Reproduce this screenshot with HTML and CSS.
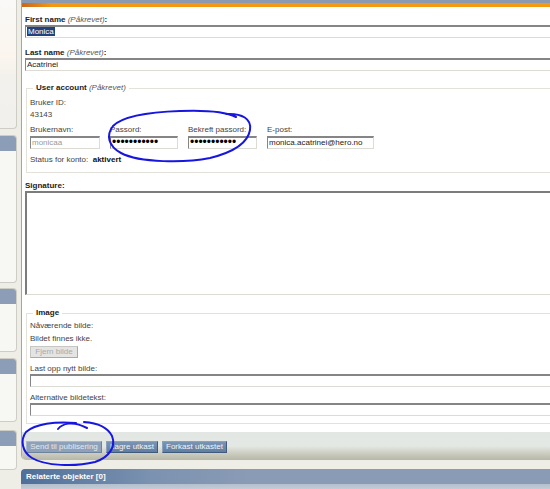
FILE: index.html
```html
<!DOCTYPE html>
<html lang="no">
<head>
<meta charset="utf-8">
<title>Bruker</title>
<link rel="stylesheet" href="styles.css">
</head>
<body>
<div class="page">
  <aside class="sidebar">
    <div class="sp p1"></div>
    <div class="sp p2"><div class="sp-h"></div></div>
    <div class="sp p3"><div class="sp-h"></div></div>
    <div class="sp p4"><div class="sp-h"></div></div>
    <div class="sp p5"><div class="sp-h"></div></div>
  </aside>
  <main class="main">
    <div class="inner">
      <div class="sheet">
        <div class="topbar"></div>
        <div class="form">
          <div class="lbl">First name <em>(Påkrevet)</em>:</div>
          <div class="field"><span class="sel">Monica</span></div>
          <div class="lbl mt10">Last name <em>(Påkrevet)</em>:</div>
          <div class="field">Acatrinei</div>

          <div class="group g-user">
            <div class="legend">User account <em>(Påkrevet)</em></div>
            <div class="line mt5">Bruker ID:</div>
            <div class="line mt2">43143</div>
            <div class="row">
              <div class="col w70"><span class="cap">Brukernavn:</span><div class="field dis">monicaa</div></div>
              <div class="col w68"><span class="cap">Passord:</span><div class="field pw">•••••••••••</div></div>
              <div class="col w69"><span class="cap">Bekreft passord:</span><div class="field pw">•••••••••••</div></div>
              <div class="col w107"><span class="cap">E-post:</span><div class="field">monica.acatrinei@hero.no</div></div>
            </div>
            <div class="line mt6">Status for konto: &nbsp;<strong>aktivert</strong></div>
          </div>

          <div class="lbl mt8">Signature:</div>
          <div class="area"></div>

          <div class="group g-image">
            <div class="legend">Image</div>
            <div class="line mt3">Nåværende bilde:</div>
            <div class="line mt3">Bildet finnes ikke.</div>
            <div class="btn-dis">Fjern bilde</div>
            <div class="line mt6">Last opp nytt bilde:</div>
            <div class="field"></div>
            <div class="line mt6">Alternative bildetekst:</div>
            <div class="field"></div>
          </div>
        </div>
        <div class="actions">
          <button class="btn light w76" type="button">Send til publisering</button>
          <button class="btn w52" type="button">Lagre utkast</button>
          <button class="btn w65" type="button">Forkast utkastet</button>
        </div>
      </div>
      <div class="related">
        <div class="rhead">Relaterte objekter [0]</div>
        <div class="rbody"></div>
      </div>
    </div>
  </main>
</div>
<svg class="marks" width="550" height="489" viewBox="0 0 550 489" aria-hidden="true">
  <path d="M 226 114 C 242 113, 252 119, 250 130 C 248 142, 234 152, 210 158 C 185 163, 140 163, 121 153 C 108 146, 106 135, 113 126 C 123 116, 150 112, 180 111 C 205 110, 224 111, 236 117" />
  <path d="M 58 429 C 62 424, 72 420, 87 428" />
  <path d="M 76 423 C 55 421, 35 424, 26 432 C 20 440, 22 452, 32 458 C 45 466, 75 467, 95 462 C 110 457, 116 446, 112 436 C 108 428, 98 423, 84 422" />
</svg>
</body>
</html>
```

FILE: styles.css
```css
html, body {
  margin: 0;
  padding: 0;
}

body {
  width: 550px;
  height: 489px;
  overflow: hidden;
  position: relative;
  background: #efeee6;
  font-family: "Liberation Sans", Arial, sans-serif;
  font-size: 8px;
  line-height: 10px;
  color: #333;
}

.page {
  display: flex;
  gap: 4px;
  width: 550px;
  height: 489px;
  overflow: hidden;
}

/* sidebar */
.sidebar {
  width: 17px;
  flex: none;
  display: flex;
  flex-direction: column;
}

.sp {
  box-sizing: border-box;
  background: #f7f7f4;
  border: 1px solid #cdcdc5;
  border-left: none;
  border-radius: 0 4px 4px 0;
  overflow: hidden;
}

.sp-h {
  height: 15px;
  background: #8c9db7;
}

.p1 {
  height: 129px;
  border-top: none;
  border-radius: 0 0 4px 0;
  background: linear-gradient(#f9f9f7 0, #fbf5ee 45%, #f3f1ec 60%, #f1f0ec 100%);
}

.p2 { height: 148px; margin-top: 6px; }
.p3 { height: 64px; margin-top: 5px; }
.p4 { height: 64px; margin-top: 6px; }
.p5 { height: 40px; margin-top: 8px; }

/* main */
.main {
  flex: 1;
  min-width: 0;
  overflow: hidden;
}

.inner {
  width: 640px;
}

.sheet {
  background: #fff;
  border-left: 1px solid #a6a69e;
  border-bottom-left-radius: 5px;
  overflow: hidden;
}

.topbar {
  height: 4px;
  border-top: 3px solid #8b9ab0;
  background: linear-gradient(90deg, #c9671c 0, #f39712 30px, #f49a10 100%);
}

.form {
  padding: 8px 0 8px 3px;
}

.lbl {
  height: 10px;
  font-weight: bold;
  color: #222;
}

em {
  font-weight: normal;
  font-style: italic;
  color: #555;
}

.line {
  height: 10px;
  color: #444;
}

.line strong {
  color: #111;
}

.mt2 { margin-top: 2px; }
.mt3 { margin-top: 3px; }
.mt5 { margin-top: 5px; }
.mt6 { margin-top: 6px; }
.mt8 { margin-top: 8px; }
.mt10 { margin-top: 10px; }

.field {
  box-sizing: border-box;
  height: 13px;
  border: 1px solid #dcdcd4;
  border-top: 2px solid #858585;
  border-left-color: #858585;
  background: #fff;
  padding-left: 1px;
  line-height: 10px;
  white-space: nowrap;
  overflow: hidden;
  color: #222;
}

.field.dis {
  color: #9a9a9a;
}

.field.pw {
  font-size: 12px;
  line-height: 9px;
  color: #000;
}

.sel {
  background: #22417f;
  color: #fff;
  padding: 0 1px;
}

.group {
  border: 1px solid #e2e2da;
  margin-left: 1px;
  padding: 0 0 7px 3px;
}

.g-user { margin-top: 17px; }
.g-image { margin-top: 18px; }

.legend {
  width: fit-content;
  height: 10px;
  margin: -6px 0 0 3px;
  padding: 0 3px;
  background: #fff;
  font-weight: bold;
  color: #222;
}

.row {
  display: flex;
  gap: 10px;
  margin-top: 5px;
}

.col {
  display: flex;
  flex-direction: column;
  gap: 1px;
}

.cap {
  height: 10px;
  color: #444;
  white-space: nowrap;
}

.w70 { width: 70px; }
.w68 { width: 68px; }
.w69 { width: 69px; }
.w107 { width: 107px; }

.area {
  box-sizing: border-box;
  height: 104px;
  border: 1px solid #dcdcd4;
  border-top: 2px solid #7c7c7c;
  border-left: 2px solid #7c7c7c;
  background: #fff;
}

.btn-dis {
  box-sizing: border-box;
  width: 48px;
  height: 12px;
  margin-top: 2px;
  border: 1px solid #c6c6c2;
  border-right-color: #a9a9a5;
  border-bottom-color: #a9a9a5;
  background: #e4e4e2;
  color: #aaa;
  text-align: center;
  line-height: 10px;
}

/* actions */
.actions {
  box-sizing: border-box;
  height: 28px;
  padding: 9px 0 0 4px;
  display: flex;
  align-items: flex-start;
  gap: 4px;
  background: linear-gradient(#e3e7e3 0, #e4e8e4 50%, #c9c9bc 80%, #b8b8a8 100%);
}

.btn {
  box-sizing: border-box;
  height: 12px;
  margin: 0;
  padding: 0;
  border: 1px solid #3f5a7b;
  border-top-color: #8aa0bb;
  border-left-color: #8aa0bb;
  background: linear-gradient(#7a94b3, #617ea1);
  color: #f1f4f8;
  font-family: inherit;
  font-size: 8px;
  line-height: 10px;
  text-align: center;
  white-space: nowrap;
}

.btn.light {
  background: #8ea1b9;
  border-color: #6d829d;
  border-top-color: #a9b8ca;
  border-left-color: #a9b8ca;
  color: #e2e8ef;
}

.w76 { width: 76px; }
.w52 { width: 52px; }
.w65 { width: 65px; }

/* related */
.related {
  margin-top: 9px;
}

.rhead {
  height: 15px;
  padding-left: 5px;
  line-height: 15px;
  border-radius: 4px 0 0 0;
  background: linear-gradient(90deg, #4f6f99 0, #7b92b0 130px, #8a9bb5 230px, #8a9bb5 100%);
  color: #fff;
  font-weight: bold;
}

.rbody {
  height: 12px;
  background: linear-gradient(#b3bfcc, #d9dee5);
}

/* hand-drawn marks */
.marks {
  position: absolute;
  left: 0;
  top: 0;
  pointer-events: none;
}

.marks path {
  fill: none;
  stroke: #1616e0;
  stroke-width: 2;
  stroke-linecap: round;
  stroke-linejoin: round;
}
```
